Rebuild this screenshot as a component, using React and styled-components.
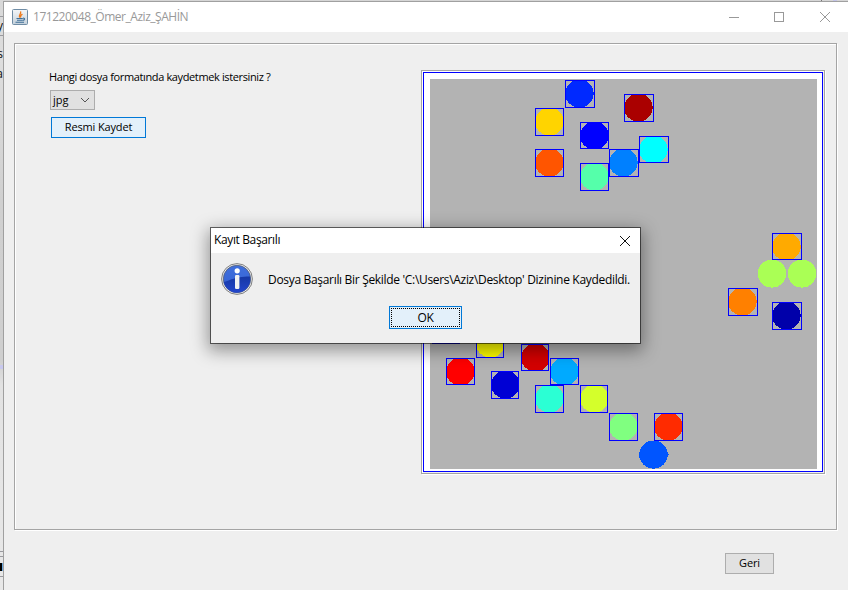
import React from "react";
import styled, { createGlobalStyle } from "styled-components";

const Global = createGlobalStyle`
  * { box-sizing: border-box; }
  html, body { margin: 0; overflow: hidden; background: #e4e4e4; }
  button { margin: 0; padding: 0; border-radius: 0; }
`;

const ui = `"Open Sans", "Noto Sans", sans-serif`;

const Desktop = styled.div`
  width: 848px;
  height: 590px;
  display: grid;
  grid-template-columns: 3px 1fr;
  grid-template-rows: 1px 1fr;
  overflow: hidden;
  position: relative;
  background: #dcdcdc;
`;

const BackStrip = styled.div`
  grid-row: 1 / 3;
  overflow: hidden;
  display: grid;
  grid-template-rows: 16px 19px 330px 4px 182px 5px 20px 1fr;
  background: linear-gradient(#d8d8d8 0, #dedede 60px, #d0d0d0 200px, #cfcfcf 360px, #e2e2e2 385px, #e8e8e8 590px);
`;

const BackCell = styled.div`
  background: ${(p) => p.$bg || "transparent"};
  border-top: ${(p) => (p.$line ? "1px solid #9a9a9f" : "0")};
  font: 12px/18px ${ui};
  color: #111;
  direction: rtl;
  white-space: nowrap;
  overflow: hidden;
`;

const BackLine = styled.div`
  height: 20px;
  line-height: 20px;
  &:first-child { margin-top: 8px; }
`;

const BackTop = styled.div`
  display: flex;
  justify-content: flex-end;
  background: #d6d6d6;
`;

const BackMark = styled.div`
  width: ${(p) => p.$w}px;
  margin-right: ${(p) => p.$gap}px;
  background: ${(p) => p.$bg};
`;

const Window = styled.main`
  display: grid;
  grid-template-rows: 30px 1fr;
  border: solid #a0a0a0;
  border-width: 1px 0 0 1px;
  background: #efefef;
`;

const TitleBar = styled.header`
  display: flex;
  align-items: center;
  background: #fff;
  padding-left: 8px;
`;

const Title = styled.h1`
  flex: 1;
  margin: 0 0 0 5px;
  font: 400 12px/18px ${ui};
  letter-spacing: -0.47px;
  color: #999;
`;

const Controls = styled.div`
  display: grid;
  grid-template-columns: 45px 46px 10px;
  padding-right: 18px;
`;

const Control = styled.button`
  width: 10px;
  height: 30px;
  border: 0;
  background: none;
  display: flex;
  align-items: center;
  justify-content: center;
`;

const Body = styled.div`
  display: flex;
  flex-direction: column;
  align-items: flex-start;
  padding: 11px 10px 0;
`;

const Etched = styled.section`
  border: 1px solid #a4a4a4;
  box-shadow: 1px 1px 0 #fff, inset 1px 1px 0 #fff;
`;

const Panel = styled(Etched)`
  width: 823px;
  height: 487px;
  display: flex;
  justify-content: space-between;
  padding: 26px 11px 0 35px;
`;

const Form = styled.div`
  display: flex;
  flex-direction: column;
  align-items: flex-start;
`;

const Label = styled.label`
  height: 14px;
  margin-left: -1px;
  font: 11px/14px ${ui};
  letter-spacing: ${(p) => p.$ls || "-0.37px"};
  color: #000;
  white-space: nowrap;
`;

const Combo = styled.div`
  width: 45px;
  height: 20px;
  margin-top: 6px;
  padding: 0 4px 0 3px;
  display: flex;
  align-items: center;
  justify-content: space-between;
  border: 1px solid #adadad;
  background: #e1e1e1;
`;

const Button = styled.button`
  width: ${(p) => p.$w}px;
  height: ${(p) => p.$h || 21}px;
  border: 1px solid ${(p) => (p.$active ? "#0078d7" : "#adadad")};
  background: ${(p) => (p.$active ? "#e3f0fa" : "#e1e1e1")};
  color: #000;
  padding-bottom: 2px;
  font: ${(p) => (p.$ui ? `12px/17px ${ui}` : `11px/15px ${ui}`)};
  letter-spacing: ${(p) => (p.$ui ? "-0.4px" : "-0.15px")};
`;

const SaveButton = styled(Button)`
  margin: 7px 0 0 1px;
`;

const BackButton = styled(Button)`
  align-self: flex-end;
  margin: 23px 64px 0 0;
`;

const Frame = styled(Etched)`
  width: 404px;
  height: 404px;
  padding: 1px;
`;

const Canvas = styled.svg`
  display: block;
  width: 400px;
  height: 400px;
  shape-rendering: crispEdges;
`;

const Dialog = styled.div`
  position: absolute;
  left: 210px;
  top: 227px;
  width: 431px;
  height: 117px;
  border: 1px solid rgba(0, 0, 0, 0.57);
  background: #efefef;
  background-clip: padding-box;
  box-shadow: 0 5px 16px 2px rgba(0, 0, 0, 0.38);
  display: grid;
  grid-template-columns: minmax(0, 1fr);
  grid-template-rows: 25px 1fr;
`;

const DialogBar = styled.div`
  display: flex;
  align-items: center;
  justify-content: space-between;
  padding: 0 9px 0 3px;
  background: #fff;
`;

const DialogTitle = styled.h2`
  margin: 0 0 2px;
  font: 400 12px/18px ${ui};
  letter-spacing: -0.37px;
  color: #000;
`;

const DialogBody = styled.div`
  display: grid;
  grid-template-rows: 32px 23px;
  row-gap: 11px;
  padding: 10px 0 0 10px;
`;

const Message = styled.div`
  display: flex;
  align-items: center;
  gap: 15px;
`;

const MessageText = styled.p`
  margin: 2px 0 0;
  font: 12px/18px ${ui};
  letter-spacing: -0.316px;
  white-space: nowrap;
`;

const OkButton = styled(Button)`
  margin-left: 168px;
  padding: 1px;
`;

const Focus = styled.span`
  display: block;
  height: 19px;
  border: 1px dotted #000;
`;

const shapes = [
  [565, 80, 30, 28, "#0029ff"],
  [624, 94, 30, 28, "#aa0000"],
  [535, 108, 29, 28, "#ffd400"],
  [580, 122, 29, 27, "#0000ff"],
  [639, 136, 30, 27, "#00ffff"],
  [535, 149, 29, 28, "#ff5500"],
  [580, 163, 29, 28, "#55ffaa"],
  [609, 149, 30, 28, "#0080ff"],
  [772, 233, 30, 27, "#ffaa00"],
  [757, 260, 30, 28, "#aaff55", true],
  [787, 260, 30, 28, "#aaff55", true],
  [728, 288, 30, 28, "#ff8000"],
  [772, 302, 30, 28, "#0000aa"],
  [432, 316, 28, 28, "#2b80ff"],
  [476, 330, 28, 28, "#ffff00"],
  [521, 344, 28, 27, "#d40000"],
  [446, 358, 29, 27, "#ff0000"],
  [550, 358, 29, 27, "#00aaff"],
  [491, 371, 28, 28, "#0000d4"],
  [535, 385, 29, 28, "#2bffd4"],
  [580, 385, 28, 28, "#d4ff2b"],
  [609, 413, 29, 28, "#80ff80"],
  [654, 413, 29, 28, "#ff2b00"],
  [639, 441, 29, 28, "#0055ff", true],
];

function Shape({ x, y, w, h, color, bare }) {
  return (
    <g>
      <svg x={x} y={y} width={w} height={h}>
        <ellipse cx={bare ? w / 2 : 14.4} cy={13.6} rx="14.3" ry="14" fill={color} />
      </svg>
      {!bare && (
        <rect x={x + 0.5} y={y + 0.5} width={w - 1} height={h - 1} fill="none" stroke="#0000ff" />
      )}
    </g>
  );
}

function Plot() {
  return (
    <Canvas viewBox="423 72 400 400">
      <rect x="423.5" y="72.5" width="399" height="399" fill="#fff" stroke="#0000ff" />
      <rect x="430" y="79" width="387" height="390" fill="#b3b3b3" />
      {shapes.map(([x, y, w, h, color, bare]) => (
        <Shape key={`${x}-${y}`} x={x} y={y} w={w} h={h} color={color} bare={bare} />
      ))}
      <path d="M667 454.5h2" stroke="#0055ff" />
    </Canvas>
  );
}

function JavaIcon() {
  return (
    <svg width="16" height="16" viewBox="0 0 16 16">
      <defs>
        <linearGradient id="tile" x2="0" y2="1">
          <stop offset="0" stopColor="#f4f6f8" />
          <stop offset="1" stopColor="#c3d0db" />
        </linearGradient>
      </defs>
      <rect x=".5" y=".5" width="15" height="15" rx="1" fill="url(#tile)" stroke="#6f8ca5" />
      <path d="M8.2 8.6C5.6 6.6 9.6 5.2 8.6 2.4M9 8.4C7.8 7 9.2 6 10.4 5" fill="none" stroke="#ee7a1c" strokeWidth="1.3" />
      <path d="M4.5 9.5h6.3M5 11.2h5.4M3.5 13.2h8.5M11 9.2c2.4-.4 2 2-.4 2.2" fill="none" stroke="#3f6f98" strokeWidth="1.1" />
    </svg>
  );
}

function InfoIcon() {
  return (
    <svg width="32" height="32" viewBox="0 0 32 32">
      <defs>
        <linearGradient id="ball" x2="0" y2="1">
          <stop offset="0" stopColor="#3f6fdc" />
          <stop offset=".5" stopColor="#3a68d8" />
          <stop offset="1" stopColor="#2448cc" />
        </linearGradient>
        <linearGradient id="shade" x2="0" y2="1">
          <stop offset="0" stopColor="#1638a4" />
          <stop offset="1" stopColor="#2346cc" />
        </linearGradient>
      </defs>
      <circle cx="16" cy="16" r="15.4" fill="#ececec" stroke="#808080" />
      <circle cx="16" cy="16" r="13.7" fill="url(#ball)" stroke="#566074" strokeWidth=".8" />
      <path d="M2.8 19C9 18 12 13.5 29 13.5A13.3 13.3 0 0 1 2.8 19z" fill="url(#shade)" />
      <circle cx="16.2" cy="7.8" r="2.6" fill="#fff" />
      <rect x="14" y="12" width="4.4" height="14" rx="1.2" fill="#f2f2f2" />
    </svg>
  );
}

export default function App() {
  return (
    <Desktop>
      <Global />
      <BackStrip>
        <BackCell />
        <BackCell $line>y</BackCell>
        <BackCell $line>
          <BackLine>s</BackLine>
          <BackLine>a</BackLine>
        </BackCell>
        <BackCell $bg="#c8c8ee" />
        <BackCell />
        <BackCell $line />
        <BackCell $line $bg="linear-gradient(to right, #000 2px, #6aa8e0 2px) 0 6px / 3px 8px no-repeat" />
        <BackCell $line />
      </BackStrip>
      <BackTop>
        <BackMark $w={1} $gap={11} $bg="#777" />
        <BackMark $w={4} $gap={11} $bg="#c4c4e8" />
      </BackTop>
      <Window>
        <TitleBar>
          <JavaIcon />
          <Title>171220048_Ömer_Aziz_ŞAHİN</Title>
          <Controls>
            <Control aria-label="Minimize">
              <svg width="10" height="10"><path d="M0 5.5h10" stroke="#999" /></svg>
            </Control>
            <Control aria-label="Maximize">
              <svg width="10" height="10"><rect x=".5" y=".5" width="9" height="9" fill="none" stroke="#999" /></svg>
            </Control>
            <Control aria-label="Close">
              <svg width="10" height="10"><path d="M0 0l10 10M10 0L0 10" stroke="#999" /></svg>
            </Control>
          </Controls>
        </TitleBar>
        <Body>
          <Panel>
            <Form>
              <Label>Hangi dosya formatında kaydetmek istersiniz ?</Label>
              <Combo>
                <Label as="span" $ls="0">jpg</Label>
                <svg width="10" height="6"><path d="M1 1l4 4 4-4" fill="none" stroke="#555" /></svg>
              </Combo>
              <SaveButton $w={95} $active>Resmi Kaydet</SaveButton>
            </Form>
            <Frame>
              <Plot />
            </Frame>
          </Panel>
          <BackButton $w={49}>Geri</BackButton>
        </Body>
      </Window>
      <Dialog role="dialog">
        <DialogBar>
          <DialogTitle>Kayıt Başarılı</DialogTitle>
          <svg width="12" height="12"><path d="M1 1l10 10M11 1L1 11" stroke="#111" /></svg>
        </DialogBar>
        <DialogBody>
          <Message>
            <InfoIcon />
            <MessageText>Dosya Başarılı Bir Şekilde 'C:\Users\Aziz\Desktop' Dizinine Kaydedildi.</MessageText>
          </Message>
          <OkButton $w={73} $h={23} $active $ui>
            <Focus>OK</Focus>
          </OkButton>
        </DialogBody>
      </Dialog>
    </Desktop>
  );
}
